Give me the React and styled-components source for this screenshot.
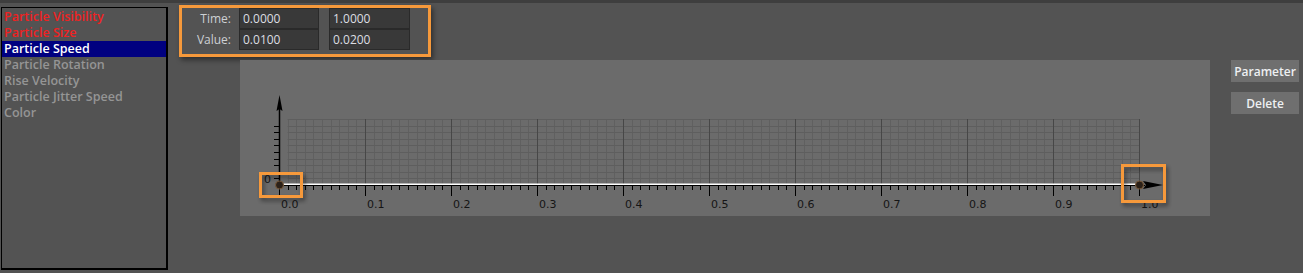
import React from "react";
import styled, { createGlobalStyle } from "styled-components";

const Global = createGlobalStyle`
  html, body { margin: 0; padding: 0; background: #535353; }
  body { font-family: "Open Sans", "Noto Sans", sans-serif; }
`;

const Page = styled.div`
  width: 1303px;
  height: 273px;
  background: #535353;
  border-top: 3px solid #3e3e3e;
  box-sizing: border-box;
  overflow: hidden;
`;

const Body = styled.div`
  display: flex;
  align-items: flex-start;
`;

const List = styled.ul`
  list-style: none;
  margin: 4px 0 0 1px;
  padding: 1px 0 0 0;
  width: 167px;
  height: 263px;
  box-sizing: border-box;
  border: 1px solid #000;
  border-right-width: 2px;
  border-bottom-width: 2px;
`;

const Item = styled.li`
  height: 16px;
  line-height: 16px;
  padding-left: 2px;
  font-size: 12.5px;
  font-weight: 600;
  white-space: nowrap;
  color: ${(p) => (p.$state === "error" ? "#ee2222" : p.$state === "active" ? "#ffffff" : "#959595")};
  background: ${(p) => (p.$state === "active" ? "#000080" : "transparent")};
`;

const Main = styled.div`
  display: flex;
  flex-direction: column;
  margin-left: 11px;
`;

const KeyBox = styled.div`
  margin-top: 2px;
  width: 252px;
  height: 52px;
  box-sizing: border-box;
  border: 3px solid #f6993b;
  box-shadow: 2px 3px 5px rgba(0, 0, 0, 0.45);
  display: flex;
  flex-direction: column;
`;

const KeyRow = styled.div`
  display: flex;
  height: 21px;
`;

const Label = styled.div`
  width: 49px;
  margin-right: 8px;
  font-size: 12px;
  font-weight: 500;
  color: #cdd0d4;
  text-align: right;
  line-height: 21px;
`;

const Fields = styled.div`
  display: flex;
  gap: 10px;
`;

const Field = styled.div`
  width: ${(p) => p.$w}px;
  background: #393939;
  border: 1px solid #2a2a2a;
  box-sizing: border-box;
  font-size: 12px;
  color: #dcdee2;
  line-height: 19px;
  padding-left: 3px;
`;

const ChartRow = styled.div`
  display: flex;
  align-items: flex-start;
  margin-top: 3px;
  padding-left: 61px;
`;

const ChartPanel = styled.div`
  width: 970px;
  height: 156px;
  background: #6b6b6b;
  display: flex;
`;

const Side = styled.div`
  display: flex;
  flex-direction: column;
  gap: 10px;
  margin-left: 21px;
`;

const Button = styled.button`
  width: 68px;
  height: 22px;
  padding: 0;
  border: none;
  background: #6f6f6f;
  color: #eef0f2;
  font-family: "Open Sans", "Noto Sans", sans-serif;
  font-size: 12px;
  font-weight: 600;
  cursor: pointer;
`;

const items = [
  { label: "Particle Visibility", state: "error" },
  { label: "Particle Size", state: "error" },
  { label: "Particle Speed", state: "active" },
  { label: "Particle Rotation", state: "off" },
  { label: "Rise Velocity", state: "off" },
  { label: "Particle Jitter Speed", state: "off" },
  { label: "Color", state: "off" },
];

const keys = [
  { label: "Time:", a: "0.0000", b: "1.0000" },
  { label: "Value:", a: "0.0100", b: "0.0200" },
];

function Chart() {
  const ox = 39;
  const oy = 125;
  const xStep = 8.6;
  const yStep = 6.6;
  const gridTop = oy - yStep * 10;
  const gridRight = ox + 860;
  const minorV = [];
  for (let i = 1; i <= 100; i++) {
    const x = Math.round(ox + i * xStep) + 0.5;
    if (i % 10 === 0) continue;
    minorV.push(<line key={"v" + i} x1={x} y1={gridTop} x2={x} y2={oy} />);
  }
  const majorV = [];
  for (let i = 1; i <= 10; i++) {
    const x = Math.round(ox + i * 86) + 0.5;
    majorV.push(<line key={"m" + i} x1={x} y1={gridTop} x2={x} y2={oy} />);
  }
  const hLines = [];
  for (let k = 1; k <= 10; k++) {
    const y = Math.round(oy - k * yStep) + 0.5;
    hLines.push(<line key={"h" + k} x1={ox + xStep} y1={y} x2={gridRight} y2={y} />);
  }
  const yTicks = [];
  for (let k = 1; k <= 9; k++) {
    const y = Math.round(oy - k * yStep) + 0.5;
    yTicks.push(<line key={"yt" + k} x1={ox - 5} y1={y} x2={ox} y2={y} />);
  }
  const xTicks = [];
  for (let i = 0; i <= 100; i++) {
    const x = Math.round(ox + i * xStep) + 0.5;
    const major = i % 10 === 0;
    xTicks.push(<line key={"xt" + i} x1={x} y1={oy + 1} x2={x} y2={major ? oy + 11 : oy + 5} />);
  }
  const labels = [];
  for (let i = 0; i <= 10; i++) {
    labels.push(
      <text key={"l" + i} x={ox + i * 86 + 2} y={oy + 23}>
        {(i / 10).toFixed(1)}
      </text>
    );
  }
  return (
    <svg width="970" height="156" viewBox="0 0 970 156">
      <defs>
        <filter id="sh" x="-30%" y="-30%" width="160%" height="160%">
          <feDropShadow dx="2" dy="3" stdDeviation="2" floodColor="#000" floodOpacity="0.45" />
        </filter>
      </defs>
      <g stroke="#606060" strokeWidth="1">{minorV}</g>
      <g stroke="#5e5e5e" strokeWidth="1">{hLines}</g>
      <g stroke="#474747" strokeWidth="1">{majorV}</g>
      <line x1={ox + 0.5} y1="44" x2={ox + 0.5} y2={oy} stroke="#000" strokeWidth="1.5" />
      <polygon points={`${ox + 0.5},35 ${ox - 2.5},51 ${ox + 0.5},49 ${ox + 3.5},51`} fill="#000" />
      <g stroke="#000" strokeWidth="1">{yTicks}</g>
      <line x1={ox} y1={oy - 0.5} x2={gridRight + 2} y2={oy - 0.5} stroke="#ffffff" strokeWidth="2" />
      <line x1={ox} y1={oy + 0.5} x2={gridRight + 6} y2={oy + 0.5} stroke="#000" strokeWidth="1" />
      <g stroke="#000" strokeWidth="1">{xTicks}</g>
      <polygon points={`${gridRight + 4},121 ${gridRight + 24},125 ${gridRight + 4},129 ${gridRight + 7},125`} fill="#000" />
      <g fontFamily="'DejaVu Sans', sans-serif" fontSize="11" fill="#151515">
        {labels}
        <text x="24" y="123">0</text>
      </g>
      <circle cx={ox + 0.5} cy={oy} r="4" fill="#2b2119" stroke="#7a5a3a" strokeWidth="1" />
      <circle cx={gridRight + 0.5} cy={oy} r="4" fill="#2b2119" stroke="#7a5a3a" strokeWidth="1" />
      <g fill="none" stroke="#f6993b" strokeWidth="3" filter="url(#sh)">
        <rect x="20.5" y="113.5" width="41" height="23" />
        <rect x="882.5" y="105.5" width="42" height="36" />
      </g>
    </svg>
  );
}

export default function App() {
  return (
    <Page>
      <Global />
      <Body>
        <List>
          {items.map((it) => (
            <Item key={it.label} $state={it.state}>
              {it.label}
            </Item>
          ))}
        </List>
        <Main>
          <KeyBox>
            {keys.map((k) => (
              <KeyRow key={k.label}>
                <Label>{k.label}</Label>
                <Fields>
                  <Field $w={80}>{k.a}</Field>
                  <Field $w={81}>{k.b}</Field>
                </Fields>
              </KeyRow>
            ))}
          </KeyBox>
          <ChartRow>
            <ChartPanel>
              <Chart />
            </ChartPanel>
            <Side>
              <Button>Parameter</Button>
              <Button>Delete</Button>
            </Side>
          </ChartRow>
        </Main>
      </Body>
    </Page>
  );
}
